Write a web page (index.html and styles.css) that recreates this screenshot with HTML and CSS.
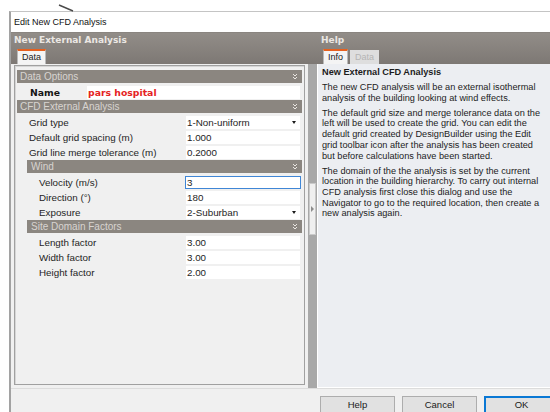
FILE: index.html
```html
<!DOCTYPE html>
<html lang="en">
<head>
<meta charset="utf-8">
<title>Edit New CFD Analysis</title>
<link rel="stylesheet" href="styles.css">
</head>
<body>
<div class="screen">
  <svg class="stray" width="18" height="8" viewBox="0 0 18 8"><line x1="1" y1="1" x2="15" y2="7" stroke="#4a4a4a" stroke-width="1.4"/></svg>
  <div class="dialog">
    <div class="titlebar">Edit New CFD Analysis</div>

    <div class="band">
      <div class="band-left">
        <div class="band-title">New External Analysis</div>
        <div class="tabs"><span class="tab active">Data</span></div>
      </div>
      <div class="band-right">
        <div class="band-title">Help</div>
        <div class="tabs"><span class="tab active">Info</span><span class="tab idle">Data</span></div>
      </div>
    </div>

    <div class="panes">
      <div class="left-pane">
        <div class="grid-box">
          <div class="bar"><span>Data Options</span><svg class="chev" width="6" height="7" viewBox="0 0 6 7"><path d="M1 1L3 3L5 1M1 4L3 6L5 4" fill="none" stroke="#ebe7e3" stroke-width="1"/></svg></div>
          <div class="row name-row"><span class="label">Name</span><span class="value">pars hospital</span></div>

          <div class="bar"><span>CFD External Analysis</span><svg class="chev" width="6" height="7" viewBox="0 0 6 7"><path d="M1 1L3 3L5 1M1 4L3 6L5 4" fill="none" stroke="#ebe7e3" stroke-width="1"/></svg></div>
          <div class="row"><span class="label">Grid type</span><span class="value select">1-Non-uniform<i class="caret"></i></span></div>
          <div class="row"><span class="label">Default grid spacing (m)</span><span class="value">1.000</span></div>
          <div class="row"><span class="label">Grid line merge tolerance (m)</span><span class="value">0.2000</span></div>

          <div class="bar sub"><span>Wind</span><svg class="chev" width="6" height="7" viewBox="0 0 6 7"><path d="M1 1L3 3L5 1M1 4L3 6L5 4" fill="none" stroke="#ebe7e3" stroke-width="1"/></svg></div>
          <div class="row indent"><span class="label">Velocity (m/s)</span><span class="value focus">3</span></div>
          <div class="row indent"><span class="label">Direction (°)</span><span class="value">180</span></div>
          <div class="row indent"><span class="label">Exposure</span><span class="value select">2-Suburban<i class="caret"></i></span></div>

          <div class="bar sub"><span>Site Domain Factors</span><svg class="chev" width="6" height="7" viewBox="0 0 6 7"><path d="M1 1L3 3L5 1M1 4L3 6L5 4" fill="none" stroke="#ebe7e3" stroke-width="1"/></svg></div>
          <div class="row indent"><span class="label">Length factor</span><span class="value">3.00</span></div>
          <div class="row indent"><span class="label">Width factor</span><span class="value">3.00</span></div>
          <div class="row indent"><span class="label">Height factor</span><span class="value">2.00</span></div>
        </div>
      </div>

      <div class="splitter"><div class="split-btn"><i class="arrow"></i></div></div>

      <div class="help-pane">
        <div class="help-title">New External CFD Analysis</div>
        <p>The new CFD analysis will be an external isothermal analysis of the building looking at wind effects.</p>
        <p>The default grid size and merge tolerance data on the left will be used to create the grid. You can edit the default grid created by DesignBuilder using the Edit grid toolbar icon after the analysis has been created but before calculations have been started.</p>
        <p>The domain of the the analysis is set by the current location in the building hierarchy. To carry out internal CFD analysis first close this dialog and use the Navigator to go to the required location, then create a new analysis again.</p>
      </div>
    </div>

    <div class="footer">
      <div></div>
      <div class="buttons">
        <span class="btn">Help</span>
        <span class="btn">Cancel</span>
        <span class="btn default">OK</span>
      </div>
    </div>
  </div>
</div>
</body>
</html>
```

FILE: styles.css
```css
html, body {
  margin: 0;
  padding: 0;
  background: #ffffff;
}

body {
  width: 550px;
  height: 412px;
  overflow: hidden;
  font-family: "Liberation Sans", Arial, sans-serif;
  color: #1c1c1c;
}

.screen {
  position: relative;
  width: 550px;
  height: 412px;
  overflow: hidden;
}

.stray {
  position: absolute;
  left: 58px;
  top: 4px;
}

.dialog {
  margin: 11px 0 0 9px;
  border-top: 1px solid #c4c4c4;
  border-left: 2px solid #a2a2a2;
  background: #f0f0f0;
  display: flex;
  flex-direction: column;
  height: 420px;
}

.titlebar {
  height: 20px;
  line-height: 20px;
  background: #ffffff;
  padding-left: 3px;
  font-size: 9px;
  color: #111;
}

/* grey header band with pane titles and tabs */
.band {
  height: 32px;
  display: grid;
  grid-template-columns: 306px 1fr;
  background: linear-gradient(#928d88, #7d7874);
  border-top: 1px solid #8a8580;
  box-sizing: border-box;
}

.band-left {
  padding-left: 3px;
}

.band-right {
  padding-left: 4px;
}

.band-title {
  font-family: "DejaVu Sans", Verdana, sans-serif;
  font-weight: bold;
  font-size: 9px;
  line-height: 12px;
  padding-top: 1px;
  color: #ebe7e3;
}

.tabs {
  margin-top: 3px;
  height: 15px;
  display: flex;
  align-items: flex-end;
}

.band-left .tabs {
  padding-left: 3px;
}

.band-right .tabs {
  padding-left: 2px;
  gap: 2px;
}

.tab {
  box-sizing: border-box;
  height: 15px;
  padding: 0 4px;
  font-size: 9px;
  line-height: 12px;
  color: #1a1a1a;
}

.tab.active {
  background: #f4f4f4;
  border-top: 2px solid #e6601e;
  border-left: 1px solid #b9b9b9;
  border-right: 1px solid #b9b9b9;
  padding: 0 4px;
}

.tab.idle {
  height: 14px;
  background: #dedede;
  color: #b4b4b4;
  padding: 1px 5px 0;
}

/* main panes */
.panes {
  height: 324px;
  display: grid;
  grid-template-columns: 297px 9px 1fr;
}

.left-pane {
  background: #f0f0f0;
  padding: 1px 3px 3px 3px;
  display: flex;
}

.grid-box {
  flex: 1;
  border: 1px solid #a0a0a0;
  box-shadow: inset 1px 1px 0 #d6d6d6;
  padding: 4px 2px;
}

.bar {
  height: 13px;
  margin-bottom: 2px;
  background: #8b8680;
  color: #d8d4d0;
  font-size: 10px;
  line-height: 13px;
  padding: 0 4px 0 3px;
  display: flex;
  justify-content: space-between;
  align-items: center;
}

.bar.sub {
  margin-left: 10px;
  padding-left: 4px;
}

.chev {
  display: block;
}

.row {
  height: 15px;
  display: flex;
  align-items: center;
  font-size: 9.8px;
}

.label {
  flex: 0 0 169px;
  box-sizing: border-box;
  padding-left: 12px;
  white-space: nowrap;
  color: #1e1e1e;
}

.row.indent .label {
  padding-left: 22px;
}

.value {
  position: relative;
  flex: 1;
  height: 13px;
  line-height: 13px;
  margin-right: 2px;
  padding-left: 1px;
  background: #ffffff;
  color: #1e1e1e;
  white-space: nowrap;
}

.value.focus {
  box-sizing: border-box;
  margin-left: -1px;
  margin-right: 1px;
  border: 1px solid #3f86d6;
  line-height: 11px;
  padding-left: 1px;
}

.caret {
  position: absolute;
  right: 4px;
  top: 5px;
  border-left: 2.5px solid transparent;
  border-right: 2.5px solid transparent;
  border-top: 3px solid #1a1a1a;
}

.name-row .label {
  flex: 0 0 70px;
  padding-left: 13px;
  font-family: "DejaVu Sans", Verdana, sans-serif;
  font-weight: bold;
  font-size: 9.3px;
  color: #151515;
}

.name-row .value {
  font-family: "DejaVu Sans", Verdana, sans-serif;
  font-weight: bold;
  font-size: 9.3px;
  color: #e52222;
}

/* vertical splitter between the panes */
.splitter {
  background: #a8a8a8;
  padding-top: 119px;
}

.split-btn {
  box-sizing: border-box;
  width: 7px;
  height: 52px;
  margin-left: 1px;
  background: #efefef;
  border: 1px solid #c9c9c9;
  display: flex;
  align-items: center;
  justify-content: center;
}

.arrow {
  border-top: 3px solid transparent;
  border-bottom: 3px solid transparent;
  border-left: 3px solid #8c8c8c;
}

/* help text pane */
.help-pane {
  background: #eceef2;
  border-left: 1px solid #ffffff;
  border-bottom: 1px solid #ffffff;
  padding: 3px 6px 0 4px;
  font-size: 9.2px;
  line-height: 10.7px;
  color: #1c1c1c;
}

.help-title {
  font-weight: bold;
  margin-bottom: 4.3px;
}

.help-pane p {
  margin: 0 0 4.3px;
}

/* dialog buttons */
.footer {
  display: grid;
  grid-template-columns: 306px 1fr;
  border-top: 1px solid #dcdcdc;
  background: #f0f0f0;
}

.buttons {
  display: flex;
  gap: 7px;
  padding: 7px 0 0 3px;
}

.btn {
  flex: 0 0 75px;
  box-sizing: border-box;
  height: 23px;
  border: 1px solid #adadad;
  background: #e1e1e1;
  font-size: 9.5px;
  line-height: 15px;
  text-align: center;
  color: #1a1a1a;
}

.btn.default {
  border-color: #0a78d4;
  box-shadow: inset 0 0 0 1px #0a78d4;
}
```
